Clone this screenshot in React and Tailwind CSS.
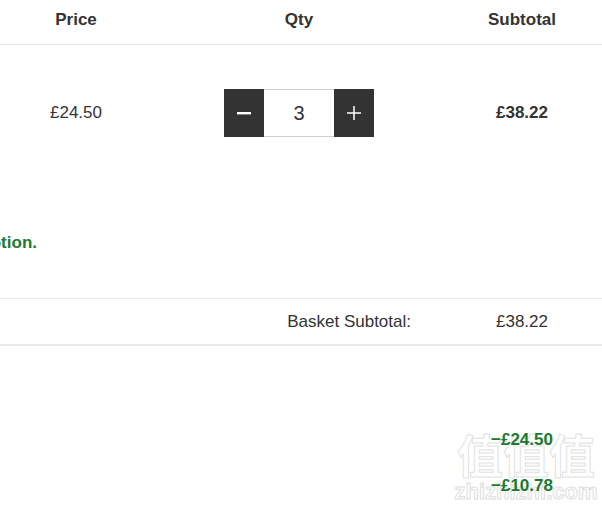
import { useState } from "react";

const font = { fontFamily: "'Liberation Sans', Arial, sans-serif" };

function Watermark() {
  return (
    <div className="pointer-events-none absolute left-[450px] top-[426px] w-[152px] flex flex-col items-center select-none">
      <span className="text-[46px] leading-[54px] font-bold text-white [-webkit-text-stroke:1px_#e2e2e2] [font-family:'Noto_Sans_CJK_SC',sans-serif]">
        值值值
      </span>
      <span className="text-[22px] leading-[24px] font-bold text-white [-webkit-text-stroke:1px_#dedede]">
        zhizhizhi.com
      </span>
    </div>
  );
}

export default function App() {
  const [qty, setQty] = useState(3);

  return (
    <div className="relative w-[602px] h-[513px] overflow-hidden bg-white text-[#333] text-[17px]" style={font}>
      <Watermark />

      {/* cabeçalho da tabela */}
      <div className="relative grid grid-cols-[152px_294px_152px] h-[45px] pb-1 items-center border-b border-[#e8e8e8] font-bold">
        <div className="text-center">Price</div>
        <div className="text-center">Qty</div>
        <div className="text-center">Subtotal</div>
      </div>

      {/* linha do produto */}
      <div className="relative grid grid-cols-[152px_294px_152px] h-[136px] items-center">
        <div className="text-center">£24.50</div>
        <div className="flex justify-center">
          <div className="flex h-[48px]">
            <button
              onClick={() => setQty((q) => Math.max(1, q - 1))}
              className="w-[40px] h-full bg-[#333] flex items-center justify-center"
            >
              <svg width="16" height="16" viewBox="0 0 16 16">
                <rect x="1" y="7" width="14" height="2.4" fill="#fff" />
              </svg>
            </button>
            <div className="w-[70px] h-full border-y border-[#cfcfcf] flex items-center justify-center text-[20px]">
              {qty}
            </div>
            <button
              onClick={() => setQty((q) => q + 1)}
              className="w-[40px] h-full bg-[#333] flex items-center justify-center"
            >
              <svg width="16" height="16" viewBox="0 0 16 16">
                <rect x="1" y="7.25" width="14" height="1.5" fill="#fff" />
                <rect x="7.25" y="1" width="1.5" height="14" fill="#fff" />
              </svg>
            </button>
          </div>
        </div>
        <div className="text-center font-bold">£38.22</div>
      </div>

      {/* mensagem de promoção */}
      <div className="relative h-[117px] pt-[7px] flex items-center">
        <div className="w-[37px] overflow-hidden flex justify-end whitespace-nowrap font-bold text-[#1b7a31]">
          <span>Your basket qualifies for a promotion.</span>
        </div>
      </div>

      {/* subtotal */}
      <div className="relative grid grid-cols-[446px_152px] h-[48px] items-center border-t border-b-2 border-[#e8e8e8]">
        <div className="text-right pr-[35px]">Basket Subtotal:</div>
        <div className="text-center">£38.22</div>
      </div>

      {/* descontos */}
      <div className="relative pt-[71px]">
        <div className="grid grid-cols-[446px_152px] h-[46px] items-center font-bold text-[#1b7a31]">
          <div />
          <div className="text-center">−£24.50</div>
        </div>
        <div className="grid grid-cols-[446px_152px] h-[46px] items-center font-bold text-[#1b7a31]">
          <div />
          <div className="text-center">−£10.78</div>
        </div>
      </div>
    </div>
  );
}
